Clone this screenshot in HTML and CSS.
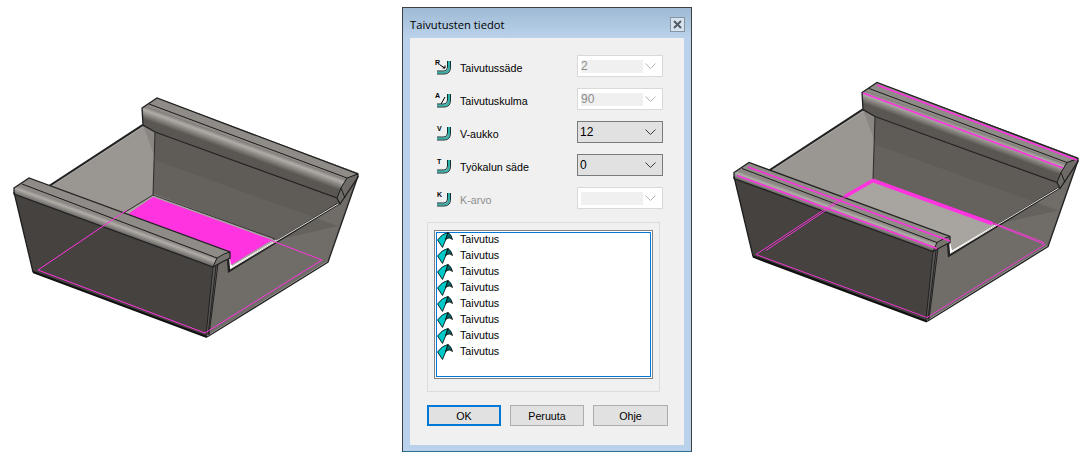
FILE: index.html
```html
<!DOCTYPE html>
<html lang="fi">
<head>
<meta charset="utf-8">
<title>Taivutusten tiedot</title>
<link rel="stylesheet" href="styles.css">
</head>
<body>
<main class="scene">
  <svg class="model model-left" viewBox="0 0 402 457" aria-hidden="true">
    <defs>
      <linearGradient id="bendFront" gradientUnits="userSpaceOnUse" x1="122" y1="224" x2="118" y2="235">
        <stop offset="0" stop-color="#8c8884"/>
        <stop offset=".25" stop-color="#b0aca8"/>
        <stop offset="1" stop-color="#454240"/>
      </linearGradient>
      <linearGradient id="bendBack" gradientUnits="userSpaceOnUse" x1="252" y1="146" x2="248" y2="157">
        <stop offset="0" stop-color="#8c8884"/>
        <stop offset=".25" stop-color="#b0aca8"/>
        <stop offset="1" stop-color="#5a5652"/>
      </linearGradient>
      <g id="walls">
        <polygon points="207,336 328,261 358,176 338,204 230,270 228,258 213,267" fill="#706c68"/>
        <polygon points="143,125 155,132 153,196 122,214 48,187" fill="#9a9691"/>
        <polygon points="143,125 155,132 155,158" fill="#8a8682"/>
        <polygon points="155,132 338,198 340,204 272,241 153,196" fill="#5f5b57"/>
        <polygon points="155,160 338,226 272,241 153,196" fill="#65615d"/>
        <polygon points="153,194 272,238 274,241 232,266 229,253 122,214" fill="#a8a5a1"/>
        <path d="M143,125 L48,187" stroke="#222" stroke-width="2.5" fill="none"/>
        <path d="M143,126.500 L50,187" stroke="#ddd" stroke-width=".6" fill="none"/>
        <path d="M155,132 L153,195 L122,214" stroke="#2a2a2a" stroke-width="1" fill="none"/>
        <path d="M153,195 L275,239" stroke="#333" stroke-width="1" fill="none"/>
      </g>
      <g id="solids">
        <path d="M338,204 L229,271 L228,258" stroke="#222" stroke-width="2.4" fill="none"/>
        <path d="M338,204 L230,269" stroke="#e8e6e2" stroke-width="1" fill="none"/>
        <polygon points="157,98 358,173 358,176 340,204 337,198 155,132 143,125 142,108" fill="#5a5652"/>
        <polygon points="157,98 358,173 350,177 347,180 147,107 142,108" fill="#8f8b87"/>
        <polygon points="142,108 147,107 347,180 340,191 144,120" fill="url(#bendBack)"/>
        <polygon points="347,178 358,174 358,177 340,204 337,198 341,188" fill="#6f6b67"/>
        <path d="M142,108 L157,98 L358,174 L358,177 L340,204 L337,198 L155,132 L143,125 Z" stroke="#222" stroke-width="1.300" fill="none"/>
        <path d="M149,104 L347,178 L341,188 L337,198 M347,178 L358,174 M341,188 L345,198" stroke="#1c1c1c" stroke-width="1" fill="none"/>
        <polygon points="14,192 33,272 207,337 213,267" fill="#454240"/>
        <polygon points="213,267 218,264 209,335 206,335" fill="#5b5856"/>
        <polygon points="29,178 230,252 230,258 213,267 14,194 14,188" fill="#8f8b87"/>
        <polygon points="14,188 21,185 217,258 213,267 14,194" fill="url(#bendFront)"/>
        <polygon points="217,258 230,252 230,258 213,267" fill="#77736f"/>
        <path d="M14,188 L29,178 L230,252 L230,258 L222,262 L213,267 L14,194 Z" stroke="#222" stroke-width="1.300" fill="none"/>
        <path d="M22,184 L217,258 L213,267 M217,258 L224,254 L230,252" stroke="#1c1c1c" stroke-width="1" fill="none"/>
        <path d="M213,267 L206,335 M216,266 L208,335 M218,264 L209,335" stroke="#1c1c1c" stroke-width=".9" fill="none"/>
        <path d="M14,192 L33,272" stroke="#1d1d1d" stroke-width="1.300" fill="none"/>
        <path d="M33,272 L207,337" stroke="#111" stroke-width="2.400" fill="none"/>
        <path d="M207,337 L328,262 L358,176" stroke="#222" stroke-width="1.400" fill="none"/>
      </g>
    </defs>
    <use href="#walls"/>
    <polygon class="mag-fill" points="153,197 272,240 231,265 229,253 128,214"/>
    <use href="#solids"/>
    <path class="sketch" d="M127,210 L38,270 L205,333 L322,260 L270,240"/>
  </svg>

  <section class="dialog">
    <header class="titlebar">
      <h1 class="title">Taivutusten tiedot</h1>
      <div class="close">
        <svg viewBox="0 0 13 13" class="close-x" aria-hidden="true"><path d="M3 3 L10 10 M10 3 L3 10"/></svg>
      </div>
    </header>
    <div class="panel">
      <div class="rows">
        <div class="row">
          <svg class="bend" viewBox="0 0 18 18" aria-hidden="true"><text x="1" y="8">R</text><path class="arrow" d="M6 8 L11 11 M11 8.500 V11 H8.500"/><path class="bend-teal" d="M3 15.500 H10 Q15 15.500 15 10 V4"/><path class="bend-dark" d="M3 14 H10 Q13.500 14 13.500 10 V4 M3 17 H10 Q16.500 17 16.500 10 V4"/></svg>
          <span class="label">Taivutussäde</span>
          <div class="combo combo-off"><span class="field">2</span><svg class="chev" viewBox="0 0 11 6" aria-hidden="true"><path d="M.5 .5 L5.500 5.500 L10.500 .5"/></svg></div>
        </div>
        <div class="row">
          <svg class="bend" viewBox="0 0 18 18" aria-hidden="true"><text x="1" y="8">A</text><path class="arrow" d="M7 14 L11 7"/><path class="bend-teal" d="M3 15.500 H10 Q15 15.500 15 10 V4"/><path class="bend-dark" d="M3 14 H10 Q13.500 14 13.500 10 V4 M3 17 H10 Q16.500 17 16.500 10 V4"/></svg>
          <span class="label">Taivutuskulma</span>
          <div class="combo combo-off"><span class="field">90</span><svg class="chev" viewBox="0 0 11 6" aria-hidden="true"><path d="M.5 .5 L5.500 5.500 L10.500 .5"/></svg></div>
        </div>
        <div class="row">
          <svg class="bend" viewBox="0 0 18 18" aria-hidden="true"><text x="3" y="8">V</text><path class="bend-teal" d="M3 15.500 H10 Q15 15.500 15 10 V4"/><path class="bend-dark" d="M3 14 H10 Q13.500 14 13.500 10 V4 M3 17 H10 Q16.500 17 16.500 10 V4"/></svg>
          <span class="label">V-aukko</span>
          <div class="combo"><span class="field">12</span><svg class="chev" viewBox="0 0 11 6" aria-hidden="true"><path d="M.5 .5 L5.500 5.500 L10.500 .5"/></svg></div>
        </div>
        <div class="row">
          <svg class="bend" viewBox="0 0 18 18" aria-hidden="true"><text x="3" y="8">T</text><path class="bend-teal" d="M3 15.500 H10 Q15 15.500 15 10 V4"/><path class="bend-dark" d="M3 14 H10 Q13.500 14 13.500 10 V4 M3 17 H10 Q16.500 17 16.500 10 V4"/></svg>
          <span class="label">Työkalun säde</span>
          <div class="combo"><span class="field">0</span><svg class="chev" viewBox="0 0 11 6" aria-hidden="true"><path d="M.5 .5 L5.500 5.500 L10.500 .5"/></svg></div>
        </div>
        <div class="row">
          <svg class="bend" viewBox="0 0 18 18" aria-hidden="true"><text x="3" y="8">K</text><path class="bend-teal" d="M3 15.500 H10 Q15 15.500 15 10 V4"/><path class="bend-dark" d="M3 14 H10 Q13.500 14 13.500 10 V4 M3 17 H10 Q16.500 17 16.500 10 V4"/></svg>
          <span class="label label-off">K-arvo</span>
          <div class="combo combo-off"><span class="field"></span><svg class="chev" viewBox="0 0 11 6" aria-hidden="true"><path d="M.5 .5 L5.500 5.500 L10.500 .5"/></svg></div>
        </div>
      </div>

      <svg class="defs-holder" aria-hidden="true">
        <defs>
          <g id="fin">
            <path d="M.5 8 Q5 1.500 11 .5 L9 7 L5.500 15.500 Z" fill="#00c8c8" stroke="#000" stroke-width=".8"/>
            <path d="M11 .5 Q14.500 2.500 15.500 7.500 L13 6 Q11 5.500 8.500 7.500 Z" fill="#006a6a" stroke="#000" stroke-width=".8"/>
          </g>
        </defs>
      </svg>

      <div class="group">
        <ul class="list">
          <li class="item"><svg class="fin" viewBox="0 0 16 16" aria-hidden="true"><use href="#fin"/></svg><span>Taivutus</span></li>
          <li class="item"><svg class="fin" viewBox="0 0 16 16" aria-hidden="true"><use href="#fin"/></svg><span>Taivutus</span></li>
          <li class="item"><svg class="fin" viewBox="0 0 16 16" aria-hidden="true"><use href="#fin"/></svg><span>Taivutus</span></li>
          <li class="item"><svg class="fin" viewBox="0 0 16 16" aria-hidden="true"><use href="#fin"/></svg><span>Taivutus</span></li>
          <li class="item"><svg class="fin" viewBox="0 0 16 16" aria-hidden="true"><use href="#fin"/></svg><span>Taivutus</span></li>
          <li class="item"><svg class="fin" viewBox="0 0 16 16" aria-hidden="true"><use href="#fin"/></svg><span>Taivutus</span></li>
          <li class="item"><svg class="fin" viewBox="0 0 16 16" aria-hidden="true"><use href="#fin"/></svg><span>Taivutus</span></li>
          <li class="item"><svg class="fin" viewBox="0 0 16 16" aria-hidden="true"><use href="#fin"/></svg><span>Taivutus</span></li>
        </ul>
      </div>

      <div class="buttons">
        <button class="btn btn-default" type="button">OK</button>
        <button class="btn" type="button">Peruuta</button>
        <button class="btn btn-wide" type="button">Ohje</button>
      </div>
    </div>
  </section>

  <svg class="model model-right" viewBox="692 0 394 457" aria-hidden="true">
    <g transform="translate(720 -15.5)">
      <use href="#walls"/>
      <path class="mag-thick" d="M125,212 L153,196 L272,239"/>
      <use href="#solids"/>
      <path class="mag-line" d="M28,182.500 L230,256.500 M17,191 L217,264 M157,100.500 L357,175.500 M143,108.500 L343,183.500"/>
      <path class="sketch-strong" d="M127,210 L36,270 L207,333 L325,260 L270,238 M137,205 L46,266 M324,258 L262,234"/>
    </g>
  </svg>
</main>
</body>
</html>
```

FILE: styles.css
```css
* {
  box-sizing: border-box;
}

html,
body {
  margin: 0;
  padding: 0;
  background: #fff;
}

.scene {
  display: flex;
  align-items: flex-start;
  width: 1086px;
  height: 457px;
  overflow: hidden;
}

.model {
  display: block;
  height: 457px;
  flex: none;
}

.model-left {
  width: 402px;
}

.model-right {
  width: 394px;
}

.mag-fill {
  fill: #ff33e0;
}

.sketch {
  fill: none;
  stroke: #ff33e0;
  stroke-width: 1;
}

.sketch-strong {
  fill: none;
  stroke: #ff33e0;
  stroke-width: 0.9;
}

.mag-thick {
  fill: none;
  stroke: #ff33e0;
  stroke-width: 3.5;
}

.mag-line {
  fill: none;
  stroke: #ff33e0;
  stroke-width: 1.7;
}

.dialog {
  flex: none;
  width: 290px;
  height: 445px;
  margin-top: 7px;
  border: 1px solid #3c3f43;
  border-bottom-color: #2a6f8e;
  background: #b9d1ea;
  display: flex;
  flex-direction: column;
  font-family: "Liberation Sans", Arial, sans-serif;
}

.titlebar {
  flex: none;
  height: 30px;
  display: flex;
  align-items: center;
  justify-content: space-between;
  padding: 2px 6px 0 7px;
  background: linear-gradient(#9fbad5, #bad2ea);
}

.title {
  margin: 0;
  font-family: "Open Sans", sans-serif;
  font-size: 11.2px;
  font-weight: 400;
  color: #000;
  white-space: nowrap;
}

.close {
  width: 15px;
  height: 15px;
  border: 1px solid #8794a3;
  background: #d6e2ee;
  display: flex;
  align-items: center;
  justify-content: center;
}

.close-x {
  width: 13px;
  height: 13px;
  fill: none;
  stroke: #555b62;
  stroke-width: 2;
}

.panel {
  flex: none;
  width: 274px;
  height: 407px;
  margin-left: 7px;
  padding: 17px 0 0 17px;
  background: #f0f0f0;
  font-size: 10.7px;
  color: #000;
}

.rows {
  display: flex;
  flex-direction: column;
  gap: 11px;
  padding-left: 7px;
}

.row {
  display: flex;
  align-items: center;
  height: 22px;
}

.bend {
  flex: none;
  width: 18px;
  height: 18px;
  margin-right: 8px;
}

.bend text {
  font-family: "Liberation Sans", sans-serif;
  font-size: 7px;
  font-weight: 700;
  fill: #000;
}

.arrow {
  fill: none;
  stroke: #000;
  stroke-width: 1;
}

.bend-teal {
  fill: none;
  stroke: #2fb2aa;
  stroke-width: 2;
}

.bend-dark {
  fill: none;
  stroke: #10302e;
  stroke-width: 1;
}

.label {
  flex: none;
  width: 117px;
  padding-top: 4px;
}

.label-off {
  color: #8e8e8e;
}

.combo {
  flex: none;
  width: 86px;
  height: 22px;
  display: flex;
  align-items: center;
  justify-content: space-between;
  padding: 0 6px 0 2px;
  border: 1px solid #7a7a7a;
  background: #e1e1e1;
  font-size: 12px;
}

.combo-off {
  border-color: #d9d9d9;
  background: #fff;
  padding-left: 3px;
  color: #8a8a8a;
}

.field {
  flex: none;
  width: 62px;
  height: 13px;
  line-height: 13px;
}

.combo-off .field {
  background: #f0f0f0;
}

.chev {
  flex: none;
  width: 11px;
  height: 6px;
  fill: none;
  stroke: #3a3a3a;
  stroke-width: 1;
}

.combo-off .chev {
  stroke: #b5b5b5;
}

.defs-holder {
  display: block;
  width: 0;
  height: 0;
}

.group {
  width: 233px;
  height: 170px;
  margin-top: 13px;
  padding: 7px 0 0 6px;
  border: 1px solid #dcdcdc;
}

.list {
  width: 219px;
  height: 149px;
  margin: 0;
  padding: 1px 2px;
  list-style: none;
  border: 1px solid #828282;
  box-shadow: inset 0 0 0 1px #fff, inset 0 0 0 2px #0078d7;
  background: #fff;
}

.item {
  display: flex;
  align-items: center;
  height: 16px;
}

.item span {
  position: relative;
  top: -1px;
}

.fin {
  flex: none;
  width: 16px;
  height: 16px;
  margin-right: 7px;
}

.buttons {
  display: flex;
  gap: 9px;
  margin-top: 13px;
}

.btn {
  width: 74px;
  height: 21px;
  padding: 0;
  border: 1px solid #adadad;
  background: #e1e1e1;
  font-family: "Liberation Sans", Arial, sans-serif;
  font-size: 10.7px;
  color: #000;
}

.btn-wide {
  width: 75px;
}

.btn-default {
  border: 2px solid #0078d7;
}
```
